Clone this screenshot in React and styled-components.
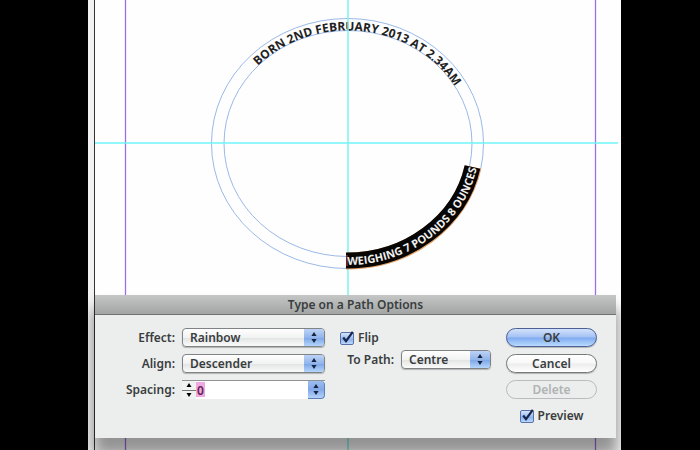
import { useState } from 'react';
import styled, { createGlobalStyle } from 'styled-components';

const GlobalStyle = createGlobalStyle`
  * {
    box-sizing: border-box;
  }

  body {
    margin: 0;
    background-color: #000;
    color: #3a3d3e;
    font-family: "Noto Sans", "Open Sans", sans-serif;
    font-size: 12px;
    font-weight: 600;
  }
`;

const Desktop = styled.main`
  min-height: 100vh;
  padding: 0 79px 0 88px;
  display: grid;
`;

const Stage = styled.section`
  display: grid;
  background-color: #fefeff;
  overflow: hidden;
`;

const Drawing = styled.svg`
  grid-area: 1 / 1;
  display: block;
  width: 100%;
`;

const PathText = styled.text`
  font-family: "Open Sans", "Noto Sans", sans-serif;
  font-size: ${(props) => props.$size};
  font-weight: 700;
  fill: ${(props) => props.$color};
`;

const Dialog = styled.form`
  grid-area: 1 / 1;
  align-self: end;
  margin: 0 5px 12px 7px;
  background-color: #ebeeed;
  box-shadow: 0 16px 14px 2px rgba(0, 0, 0, 0.42);
`;

const TitleBar = styled.h1`
  margin: 0;
  height: 20px;
  border-bottom: 1px solid #6f7271;
  background: linear-gradient(#c4c7c6, #a2a5a4);
  font-size: 12px;
  font-weight: 600;
  line-height: 20px;
  text-align: center;
`;

const Body = styled.div`
  display: grid;
  grid-template-columns: 1fr 151px 91px;
  column-gap: 15px;
  padding: 13px 19px 13px 0;
`;

const Fields = styled.div`
  display: grid;
  grid-template-columns: 80px 1fr;
  grid-auto-rows: 19px;
  align-content: start;
  align-items: center;
  gap: 7px;
`;

const Column = styled.div`
  display: flex;
  flex-direction: column;
  gap: ${(props) => props.$gap};
`;

const Row = styled.div`
  height: 19px;
  display: flex;
  align-items: center;
  justify-content: ${(props) => props.$align || 'flex-start'};
  gap: 7px;
`;

const Label = styled.label`
  flex: 1;
  line-height: 19px;
  text-align: right;
  white-space: nowrap;
`;

const SelectBox = styled.div`
  height: 19px;
  width: ${(props) => props.$width || 'auto'};
  display: grid;
  grid-template-columns: 1fr 20px;
  border: 1px solid #808386;
  border-radius: 4px;
  background: linear-gradient(#fff, #f1f2f2 50%, #e2e4e4 52%, #fafafa);
  box-shadow: 0 1px 1px rgba(0, 0, 0, 0.25);
  overflow: hidden;
`;

const Select = styled.select`
  grid-area: 1 / 1 / 2 / 3;
  appearance: none;
  min-width: 0;
  padding: 0 20px 0 7px;
  border: none;
  background: none;
  color: inherit;
  font: inherit;
  line-height: 17px;
`;

const Arrows = styled.span`
  grid-area: 1 / 2;
  display: grid;
  place-items: center;
  background: linear-gradient(#bcd3f5, #92b5ec 50%, #7da5e6 52%, #b4d6fc);
  pointer-events: none;
`;

const Combo = styled.div`
  height: 19px;
  display: grid;
  grid-template-columns: 14px 1fr 17px;
  border-top: 1px solid #8f9294;
  background-color: #fff;
`;

const Stepper = styled.div`
  display: grid;
  background-color: #f1f2f2;
`;

const StepButton = styled.button`
  padding: 0;
  border: none;
  border-bottom: ${(props) => (props.$up ? '1px solid #777' : 'none')};
  background: none;
  display: grid;
  place-items: center;
`;

const SpacingInput = styled.input`
  min-width: 0;
  padding: 0 1px;
  border: none;
  outline: none;
  background: linear-gradient(#f0a8e0, #f0a8e0) 0 1px / 9px 15px no-repeat;
  color: #64224f;
  font: inherit;
`;

const ComboButton = styled.button`
  padding: 0;
  border: 1px solid #5d7fb8;
  border-width: 0 1px 1px 0;
  border-radius: 0 4px 4px 0;
  background: linear-gradient(#9dbdf0, #82a8e8 50%, #b4d2fa);
  display: grid;
  place-items: center;
`;

const CheckLabel = styled.label`
  height: 19px;
  display: flex;
  align-items: center;
  gap: 4px;
`;

const CheckBox = styled.span`
  display: grid;
  width: 14px;
  height: 16px;
`;

const CheckInput = styled.input`
  grid-area: 1 / 1;
  align-self: end;
  appearance: none;
  width: 14px;
  height: 13px;
  margin: 0 0 1px;
  border: 1px solid #5672a8;
  border-radius: 2px;
  background: linear-gradient(#d6e5fb, #8fb4ee 60%, #bcdafc);
`;

const Tick = styled.svg`
  grid-area: 1 / 1;
  z-index: 1;
  pointer-events: none;
`;

const Button = styled.button`
  height: 19px;
  padding: 0;
  border: 1px solid ${(props) => (props.$primary ? '#4c5f96' : '#777a7b')};
  border-radius: 10px;
  background: ${(props) =>
    props.$primary
      ? 'linear-gradient(#d3e2fb, #a3c1f4 48%, #7faaf0 52%, #b9dcff)'
      : 'linear-gradient(#fff, #f8f8f8 48%, #ececec 52%, #fff)'};
  box-shadow: 0 1px 1px rgba(0, 0, 0, 0.25);
  color: inherit;
  font: inherit;
  line-height: 17px;

  &:disabled {
    border-color: #b9bcbc;
    background: #ebeeed;
    box-shadow: none;
    color: #b0b3b3;
  }
`;

const ArrowPair = () => (
  <svg width="8" height="11" viewBox="0 0 8 11" fill="#17233f">
    <path d="M4 0 6.6 4H1.4zM4 11 1.4 7h5.2z" />
  </svg>
);

const Popup = ({ id, options, width }) => (
  <SelectBox $width={width}>
    <Select id={id}>
      {options.map((option) => (
        <option key={option}>{option}</option>
      ))}
    </Select>
    <Arrows>
      <ArrowPair />
    </Arrows>
  </SelectBox>
);

const Check = ({ label }) => {
  const [checked, setChecked] = useState(true);

  return (
    <CheckLabel>
      <CheckBox>
        <CheckInput
          type="checkbox"
          checked={checked}
          onChange={(e) => setChecked(e.target.checked)}
        />
        {checked && (
          <Tick width="14" height="16" viewBox="0 0 14 16" fill="none" stroke="#17264d" strokeWidth="2.2">
            <path d="M3.2 7.5 6 11.2 12.8 1.8" />
          </Tick>
        )}
      </CheckBox>
      {label}
    </CheckLabel>
  );
};

const Artwork = () => (
  <Drawing viewBox="0 0 533 450" role="img" aria-label="Type on an ellipse">
    <defs>
      <path id="birth" d="M136 143.5A124 113 0 0 1 384 143.5" />
      <path id="weight" d="M258.5 265A132 121.5 0 0 0 391.5 143.5" />
    </defs>
    <rect width="6" height="450" fill="#f2f2f2" />
    <path d="M6.5 0V450" stroke="#333" />
    <path d="M37.5 0V450M507.5 0V450" stroke="#a06ee0" strokeWidth="1.3" />
    <g fill="none" stroke="#9bb9e6">
      <ellipse cx="259.5" cy="143.5" rx="136" ry="125" />
      <ellipse cx="260" cy="143.5" rx="124" ry="113" />
    </g>
    <PathText $color="#222" $size="12px">
      <textPath href="#birth" startOffset="87">BORN 2ND FEBRUARY 2013 AT 2.34AM</textPath>
    </PathText>
    <path d="M7 143H530" stroke="#6ef4f8" strokeWidth="1.5" />
    <path d="M260 0V450" stroke="#7cf3ec" strokeWidth="1.5" />
    <path d="M258 261A128.5 117.5 0 0 0 385 167" fill="none" stroke="#e2a56c" strokeWidth="17" />
    <path d="M258 260.5A128.5 117.5 0 0 0 384.5 167" fill="none" stroke="#080604" strokeWidth="16" />
    <path d="M259 255V266" stroke="#c8403a" />
    <PathText $color="#efefef" $size="11px">
      <textPath href="#weight" startOffset="1">WEIGHING 7 POUNDS 8 OUNCES</textPath>
    </PathText>
  </Drawing>
);

const PathOptions = () => {
  const [spacing, setSpacing] = useState(0);

  return (
    <Dialog onSubmit={(e) => e.preventDefault()}>
      <TitleBar>Type on a Path Options</TitleBar>
      <Body>
        <Fields>
          <Label htmlFor="effect">Effect:</Label>
          <Popup id="effect" options={['Rainbow', 'Skew', 'Gravity']} />
          <Label htmlFor="align">Align:</Label>
          <Popup id="align" options={['Descender', 'Baseline', 'Ascender']} />
          <Label htmlFor="spacing">Spacing:</Label>
          <Combo>
            <Stepper>
              <StepButton $up type="button" aria-label="Increase" onClick={() => setSpacing(Number(spacing) + 1)}>
                <svg width="6" height="4" viewBox="0 0 6 4"><path d="M3 0 5.5 4H.5z" /></svg>
              </StepButton>
              <StepButton type="button" aria-label="Decrease" onClick={() => setSpacing(Number(spacing) - 1)}>
                <svg width="6" height="4" viewBox="0 0 6 4"><path d="M3 4 .5 0h5z" /></svg>
              </StepButton>
            </Stepper>
            <SpacingInput id="spacing" value={spacing} onChange={(e) => setSpacing(e.target.value)} />
            <ComboButton type="button" aria-label="Spacing presets">
              <ArrowPair />
            </ComboButton>
          </Combo>
        </Fields>
        <Column $gap="3px">
          <Check label="Flip" />
          <Row>
            <Label htmlFor="to-path">To Path:</Label>
            <Popup id="to-path" width="90px" options={['Centre', 'Top', 'Bottom']} />
          </Row>
        </Column>
        <Column $gap="7px">
          <Button $primary type="submit">OK</Button>
          <Button type="button">Cancel</Button>
          <Button type="button" disabled>Delete</Button>
          <Row $align="center">
            <Check label="Preview" />
          </Row>
        </Column>
      </Body>
    </Dialog>
  );
};

export default function App() {
  return (
    <>
      <GlobalStyle />
      <Desktop>
        <Stage>
          <Artwork />
          <PathOptions />
        </Stage>
      </Desktop>
    </>
  );
}
